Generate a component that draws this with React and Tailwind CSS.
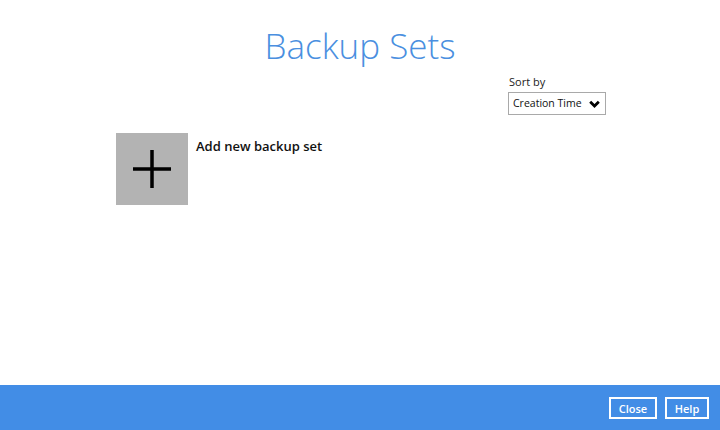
import React from "react";

const font = { fontFamily: '"Open Sans", "Noto Sans", sans-serif' };

export default function App() {
  return (
    <div className="w-[720px] h-[430px] flex flex-col bg-white" style={font}>
      <main className="flex-1 relative">
        <h1 className="text-center text-[35px] font-light text-[#4a8fe0] pt-[23px] leading-[46px]">
          Backup Sets
        </h1>

        {/* Sort by */}
        <div className="absolute left-[508px] top-[75px] flex flex-col">
          <span className="text-[11px] text-[#222] pl-[1px] leading-[14px]">Sort by</span>
          <div className="mt-[3px] w-[98px] h-[23px] border border-[#a9a9a9] flex items-center justify-between pl-[4px] pr-[5px]">
            <span className="text-[10.5px] text-[#111]">Creation Time</span>
            <svg width="11" height="8" viewBox="0 0 11 8">
              <path d="M1.2 1.8 L5.5 6 L9.8 1.8" stroke="#000" strokeWidth="2.8" fill="none" />
            </svg>
          </div>
        </div>

        {/* Backup set list */}
        <div className="pl-[116px] pt-[64px] flex gap-[8px]">
          <div className="w-[72px] h-[72px] bg-[#b3b3b3] flex items-center justify-center">
            <svg width="38" height="38" viewBox="0 0 38 38">
              <rect x="17.25" y="0" width="3.5" height="38" fill="#000" />
              <rect x="0" y="17.25" width="38" height="3.5" fill="#000" />
            </svg>
          </div>
          <span className="text-[13px] font-semibold text-[#111] pt-[4px]">Add new backup set</span>
        </div>
      </main>

      <footer className="h-[45px] bg-[#428de6] flex items-center justify-end gap-[8px] pr-[11px] pt-[1px]">
        <button className="w-[48px] h-[22px] border-2 border-white text-white text-[11px] font-semibold leading-none">
          Close
        </button>
        <button className="w-[44px] h-[22px] border-2 border-white text-white text-[11px] font-semibold leading-none">
          Help
        </button>
      </footer>
    </div>
  );
}
